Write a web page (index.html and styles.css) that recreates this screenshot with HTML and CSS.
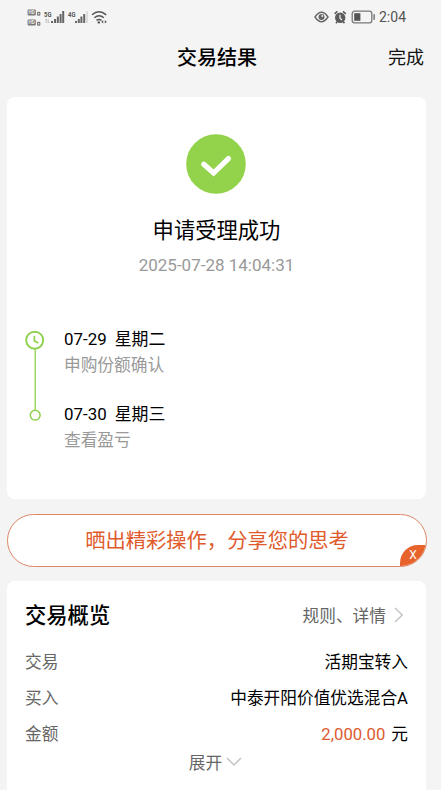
FILE: index.html
```html
<!DOCTYPE html>
<html lang="zh-CN">
<head>
    <meta charset="UTF-8">
    <meta name="viewport" content="width=device-width, initial-scale=1.0">
    <title>交易结果</title>
    <link rel="stylesheet" href="styles.css">
</head>
<body>

    <div class="status-bar">
        <svg class="status-left" width="84" height="20" viewBox="0 0 84 20">
            <!-- HD badges -->
            <g fill="#777">
                <rect x="1.6" y="2.6" width="8.2" height="6" rx="1"/>
                <rect x="1.6" y="12.6" width="8.2" height="6" rx="1"/>
            </g>
            <g class="hd">
                <text x="2.6" y="7.4">HD</text>
                <text x="2.6" y="17.4">HD</text>
            </g>
            <g fill="none" stroke="#777" stroke-width="1.2">
                <rect x="11.6" y="5.4" width="2.2" height="2.8" rx="0.6"/>
                <rect x="11.6" y="15.4" width="2.2" height="2.8" rx="0.6"/>
            </g>
            <text class="net" x="18" y="9.8" textLength="7.4" lengthAdjust="spacingAndGlyphs">5G</text>
            <path d="M20.3 16v-4l-1.2 1.2M22.2 12v4l1.2-1.2" fill="none" stroke="#bbb" stroke-width="0.9"/>
            <g fill="#666">
                <rect x="25" y="14" width="2" height="2"/>
                <rect x="28" y="12" width="2" height="4"/>
                <rect x="30.8" y="9.5" width="2" height="6.5"/>
                <rect x="33.6" y="7" width="2" height="9"/>
                <rect x="36.2" y="4" width="2" height="12"/>
            </g>
            <text class="net" x="42" y="9.8" textLength="7.4" lengthAdjust="spacingAndGlyphs">4G</text>
            <g fill="#666">
                <rect x="49" y="14" width="2" height="2"/>
                <rect x="51.8" y="12" width="2" height="4"/>
                <rect x="54.4" y="9.5" width="2" height="6.5"/>
                <rect x="57.2" y="7" width="2" height="9"/>
                <rect x="60" y="4" width="2" height="12" fill="#ddd"/>
            </g>
            <g fill="none" stroke="#555" stroke-width="1.5">
                <path d="M66 7.8q7-6 14.2 0"/>
                <path d="M68.4 10.7q4.7-4 9.4 0"/>
                <path d="M70.5 13.4q2.5-2 5 0"/>
            </g>
            <circle cx="72.8" cy="15.4" r="1.2" fill="#555"/>
            <path d="M75.2 14.8l2-1.6v3.2zM80.8 14.8l-2-1.6v3.2z" fill="#555"/>
        </svg>
        <div class="status-right">
            <svg width="62" height="16" viewBox="0 0 62 16">
                <!-- eye -->
                <path d="M1 8q6.5-9.5 13 0q-6.5 9.5-13 0z" fill="none" stroke="#666" stroke-width="1.4"/>
                <circle cx="7.5" cy="8" r="3" fill="#666"/>
                <circle cx="8.3" cy="7" r="0.9" fill="#f4f4f4"/>
                <!-- alarm -->
                <circle cx="26.2" cy="8.8" r="5.2" fill="#5c5c5c"/>
                <path d="M26 5.8v3.4l2 1.8" fill="none" stroke="#f4f4f4" stroke-width="1.2"/>
                <path d="M20.6 4.8l2.8-2.4M31.8 4.8L29 2.4M23 12.8l-1 1.4M29.4 12.8l1 1.4" stroke="#5c5c5c" stroke-width="1.6"/>
                <!-- battery -->
                <rect x="38.2" y="2.2" width="19.6" height="11.6" rx="2.4" fill="none" stroke="#777" stroke-width="1.3"/>
                <rect x="40.2" y="4.2" width="6.2" height="7.6" fill="#555"/>
                <rect x="59.4" y="5.2" width="1.5" height="5.6" fill="#777"/>
            </svg>
            <span class="clock">2:04</span>
        </div>
    </div>

    <div class="nav-bar">
        <h1>交易结果</h1>
        <span class="done">完成</span>
    </div>

    <div class="card result">
        <svg class="success-icon" width="60" height="60" viewBox="0 0 60 60">
            <circle cx="30" cy="30" r="29.8" fill="#93d24b"/>
            <path d="M17.8 30.2L27.6 39L42.4 24.6" fill="none" stroke="#fff" stroke-width="5.2" stroke-linecap="round"/>
        </svg>
        <h2>申请受理成功</h2>
        <p class="time">2025-07-28 14:04:31</p>

        <div class="timeline">
            <svg width="20" height="92" viewBox="0 0 20 92">
                <path d="M10.2 19v61" stroke="#8fd14f" stroke-width="1.3"/>
                <circle cx="9.7" cy="10.2" r="8.5" fill="none" stroke="#8fd14f" stroke-width="1.9"/>
                <path d="M9.4 5.8v5.1l4 2.1" fill="none" stroke="#8fd14f" stroke-width="1.7"/>
                <circle cx="10.2" cy="85.2" r="4.9" fill="#fff" stroke="#8fd14f" stroke-width="1.5"/>
            </svg>
            <div class="steps">
                <div class="step">
                    <div class="date"><span>07-29</span><span>星期二</span></div>
                    <div class="desc">申购份额确认</div>
                </div>
                <div class="step">
                    <div class="date"><span>07-30</span><span>星期三</span></div>
                    <div class="desc">查看盈亏</div>
                </div>
            </div>
        </div>
    </div>

    <div class="share">
        <span>晒出精彩操作，分享您的思考</span>
        <div class="close">X</div>
    </div>

    <div class="card overview">
        <div class="overview-head">
            <h3>交易概览</h3>
            <div class="more">
                <span>规则、详情</span>
                <svg width="10" height="16" viewBox="0 0 10 16"><path d="M1 1l7.2 7L1 15" fill="none" stroke="#c4c4c4" stroke-width="1.5"/></svg>
            </div>
        </div>
        <div class="row">
            <span class="label">交易</span>
            <span>活期宝转入</span>
        </div>
        <div class="row">
            <span class="label">买入</span>
            <span>中泰开阳价值优选混合A</span>
        </div>
        <div class="row">
            <span class="label">金额</span>
            <span><span class="amount">2,000.00</span>元</span>
        </div>
        <div class="expand">
            <span>展开</span>
            <svg width="16" height="10" viewBox="0 0 16 10"><path d="M1 1l7 7l7-7" fill="none" stroke="#c4c4c4" stroke-width="1.5"/></svg>
        </div>
    </div>

</body>
</html>
```
FILE: styles.css
```css
* {
    box-sizing: border-box;
}
body {
    margin: 0;
    height: 790px;
    overflow: hidden;
    background-color: #f4f4f4;
    color: #111;
    font-family: Roboto, "Noto Sans CJK SC", sans-serif;
    font-size: 16.7px;
}
h1, h2, h3, p {
    margin: 0;
}
.status-bar {
    display: flex;
    justify-content: space-between;
    height: 34px;
    padding: 7px 35px 0 26px;
}
.hd {
    fill: #eee;
    font-size: 4.5px;
    font-weight: bold;
}
.net {
    fill: #555;
    font-size: 8px;
    font-weight: bold;
}
.status-right {
    display: flex;
    align-items: center;
    gap: 3px;
    height: 20px;
}
.clock {
    color: #555;
    font-size: 14px;
    line-height: 20px;
}
.nav-bar {
    display: grid;
    grid-template-columns: 1fr auto 1fr;
    align-items: center;
    height: 63px;
    padding: 0 17px 16px 10px;
}
.nav-bar h1 {
    grid-column: 2;
    font-size: 20px;
    font-weight: 500;
    line-height: 30px;
    color: #000;
}
.done {
    justify-self: end;
    font-size: 18px;
    line-height: 30px;
}
.card {
    margin: 0 15px 0 7px;
    background-color: #fff;
    border-radius: 8px;
}
.result {
    height: 402px;
    padding-top: 37px;
    text-align: center;
}
.success-icon {
    display: block;
    margin: 0 auto 0 179px;
}
.result h2 {
    margin-top: 21px;
    font-size: 21.3px;
    font-weight: 400;
    line-height: 32px;
    color: #000;
}
.time {
    margin-top: 6px;
    font-size: 17px;
    line-height: 24px;
    color: #999;
}
.timeline {
    display: flex;
    gap: 19px;
    margin-top: 53px;
    padding-left: 18px;
    text-align: left;
}
.steps {
    margin-top: -1px;
}
.step {
    height: 75px;
}
.date {
    display: flex;
    gap: 8px;
    line-height: 20px;
    font-size: 16.9px;
    color: #000;
}
.desc {
    margin-top: 6px;
    line-height: 22px;
    color: #999;
}
.share {
    display: flex;
    align-items: center;
    justify-content: center;
    position: relative;
    height: 53px;
    margin: 15px 14px 14px 7px;
    padding-bottom: 3px;
    overflow: hidden;
    border: 1px solid #dd8766;
    border-radius: 27px;
    background-color: #fff;
    color: #e05a2b;
    font-size: 20.3px;
}
.close {
    position: absolute;
    right: 0;
    bottom: 0;
    width: 26px;
    height: 21px;
    border-radius: 18px 0 0 0;
    background-color: #e8622c;
    color: #fff;
    font-size: 12px;
    line-height: 20px;
    text-align: center;
}
.overview {
    height: 240px;
    padding: 18px 18px 0 18px;
}
.overview-head {
    display: flex;
    align-items: center;
    justify-content: space-between;
    height: 33px;
    margin-bottom: 13px;
}
.overview h3 {
    font-size: 21.3px;
    font-weight: 500;
    line-height: 32px;
    color: #000;
}
.more {
    display: flex;
    align-items: center;
    gap: 8px;
    margin-right: 4px;
    padding-bottom: 2px;
    color: #666;
}
.row {
    display: flex;
    align-items: center;
    justify-content: space-between;
    height: 36px;
    color: #000;
    line-height: 24px;
}
.label {
    color: #666;
}
.amount {
    margin-right: 6px;
    color: #db5a2e;
}
.expand {
    display: flex;
    align-items: center;
    justify-content: center;
    gap: 4px;
    height: 17px;
    margin-right: 2px;
    color: #666;
}
```
